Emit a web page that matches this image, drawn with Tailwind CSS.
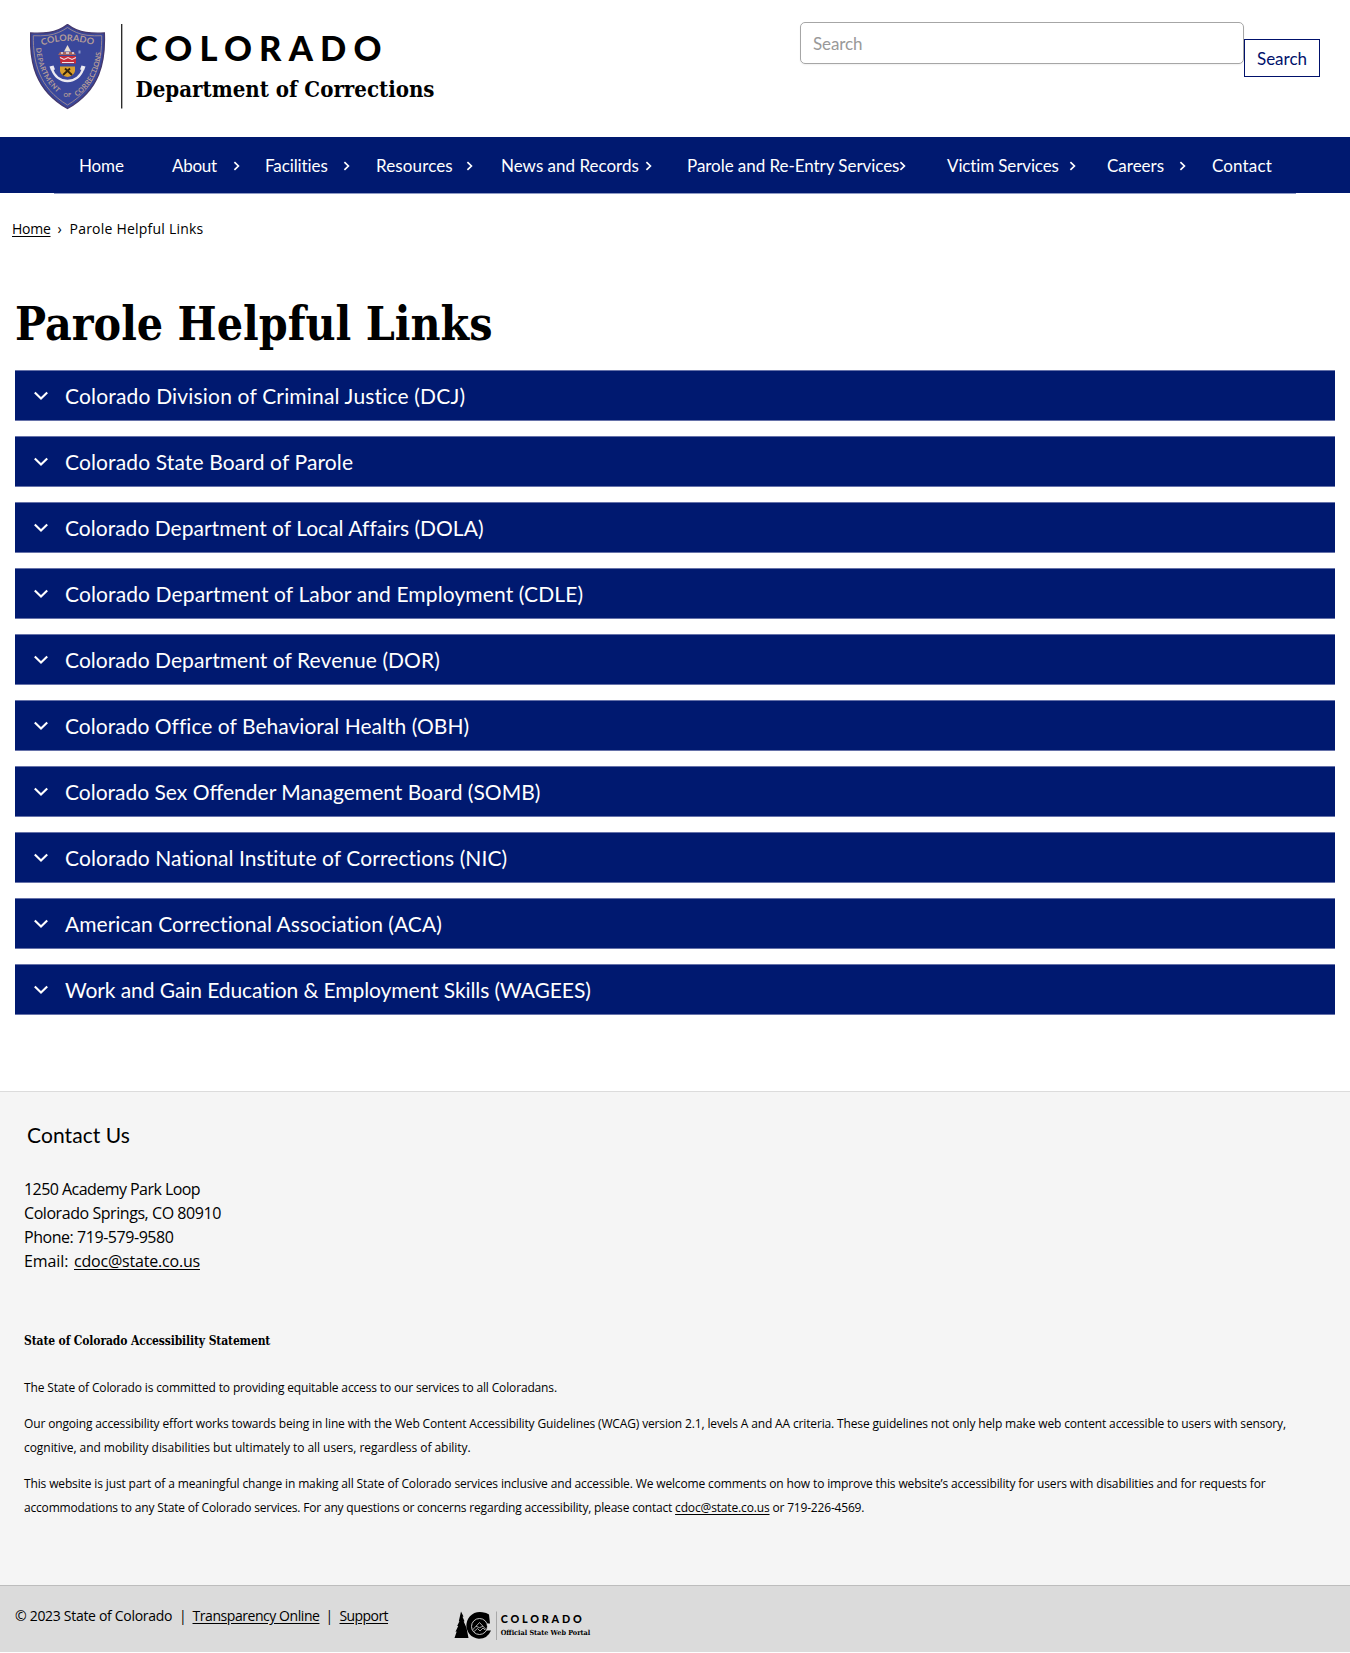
<!DOCTYPE html>
<html lang="en">
<head>
<meta charset="utf-8">
<title>Parole Helpful Links | Department of Corrections</title>
<script src="https://cdn.jsdelivr.net/npm/@tailwindcss/browser@4"></script>
</head>
<body class="bg-white text-black font-['Open_Sans',sans-serif] overflow-x-hidden">
<svg class="hidden">
  <symbol id="chev-right" viewBox="0 0 7 10"><path d="M1.4 1.2 5.4 5 1.4 8.8" fill="none" stroke="currentColor" stroke-width="1.7"/></symbol>
  <symbol id="chev-down" viewBox="0 0 14 10"><path d="M.8 1.4 7 7.6l6.2-6.200" fill="none" stroke="currentColor" stroke-width="2.100"/></symbol>
</svg>

<header class="flex h-[137px] justify-between pl-[30px] pr-[30px]">
  <svg class="mt-6 h-[86px] w-[410px]" viewBox="30 24 410 86">
    <path d="M67.500 24.500C72 28 79 31.500 86 32.500C92 33.300 98 33.300 104.300 33C105.500 62 100 90 67.500 108.500C35 90 29.500 62 30.700 33C37 33.300 43 33.300 49 32.500C56 31.500 63 28 67.500 24.500Z" fill="#3a479b" stroke="#45396d" stroke-width="1.400"/>
    <path d="M67.500 27.500C73 31.500 80 34.500 87 35.300C92 35.900 97 35.900 101.700 35.700C102 62 96 88 67.500 105C39 88 33 62 33.300 35.700C38 35.900 43 35.900 48 35.300C55 34.500 62 31.500 67.500 27.500Z" fill="none" stroke="#a08c92" stroke-width=".9"/>
    <path id="arcTop" d="M42 45.500Q67.500 36.500 94 45.500" fill="none"/>
    <path id="arcLeft" d="M36 48C38 67 44 82 60 95" fill="none"/>
    <path id="arcRight" d="M75 94.500C91 82 97 67 98.500 48" fill="none"/>
    <g font-family="Lato, sans-serif" font-weight="700" fill="#b39c98">
      <text font-size="9"><textPath href="#arcTop" textLength="52" lengthAdjust="spacingAndGlyphs">COLORADO</textPath></text>
      <text font-size="7"><textPath href="#arcLeft" textLength="51">DEPARTMENT</textPath></text>
      <text font-size="7" dy="3"><textPath href="#arcRight" textLength="50">CORRECTIONS</textPath></text>
      <text x="63.500" y="97" font-size="5.500">OF</text>
    </g>
    <path d="M67.500 45 71 51.500H64Z" fill="#e9ded2"/>
    <path d="M60 52h14l2 3H58Z" fill="#a46660"/>
    <path d="M61 53h2m3 0h3m3 0h2" stroke="#e8e2e8" stroke-width="1.300"/>
    <path d="M78.500 50.500h2v3h-2z" fill="#8b97c4"/>
    <path d="M59.500 56H76V63.500H60.500Z" fill="#c62c3b"/>
    <path d="M60 57.500l4 2 4-2 4 2 4-2M62 62.500h12" fill="none" stroke="#efe6ea" stroke-width="1.100"/>
    <path d="M60 66.500H75V71Q74 76 67.500 77Q61 76 60 71Z" fill="#d9a02d"/>
    <path d="M63 75 70 68.500M72 75 65 68.500" stroke="#33240f" stroke-width="1.900"/>
    <path d="M52 69C54 76 60 81 67.500 81C75 81 81 76 83 69" fill="none" stroke="#eceaf2" stroke-width="2.300"/>
    <path d="M49.500 66.500l4-1 1.500 4-4 1zM85.500 66.500l-4-1-1.500 4 4 1z" fill="#eceaf2"/>
    <path d="M121.700 24V108.500" stroke="#222" stroke-width="1.300"/>
    <text x="135" y="61" font-family="Lato, sans-serif" font-weight="900" font-size="34.500" textLength="246.500" lengthAdjust="spacing">COLORADO</text>
    <text x="135.500" y="96.700" font-family="'DejaVu Serif Condensed','DejaVu Serif',serif" font-weight="700" font-size="22" textLength="299" lengthAdjust="spacingAndGlyphs">Department of Corrections</text>
  </svg>
  <form class="flex items-start font-['Lato',sans-serif] text-[17px]">
    <div class="mt-[22px] flex h-[42px] w-[444px] items-center rounded-[5px] border border-[#a6a6a6] pt-0.5 pl-3 tracking-[-0.1px] text-[#999] shadow-[0_1px_2px_rgba(0,0,0,0.06)]">Search</div>
    <button type="button" class="mt-[39px] flex h-[38px] w-[76px] items-center justify-center border border-[#00116b] pt-0.5 text-[#00116b]">Search</button>
  </form>
</header>

<nav class="flex h-[56px] items-center bg-[#001970] pt-0.5 pl-[79px] font-['Lato',sans-serif] text-[17px] whitespace-nowrap text-white">
  <a class="w-[93px] tracking-[-0.15px]">Home</a>
  <a class="flex w-[93px] items-center justify-between pr-[25px] tracking-[-0.3px]">About<svg class="h-[10px] w-[7px]"><use href="#chev-right"/></svg></a>
  <a class="flex w-[111px] items-center justify-between pr-[26px] tracking-[-0.1px]">Facilities<svg class="h-[10px] w-[7px]"><use href="#chev-right"/></svg></a>
  <a class="flex w-[125px] items-center justify-between pr-[28px] tracking-[0.13px]">Resources<svg class="h-[10px] w-[7px]"><use href="#chev-right"/></svg></a>
  <a class="flex w-[186px] items-center justify-between pr-[35px]">News and Records<svg class="h-[10px] w-[7px]"><use href="#chev-right"/></svg></a>
  <a class="flex w-[260px] items-center tracking-[-0.05px]"><span class="w-[211.5px]">Parole and Re-Entry Services</span><svg class="h-[10px] w-[7px] shrink-0"><use href="#chev-right"/></svg></a>
  <a class="flex w-[160px] items-center justify-between pr-[31px] tracking-[-0.13px]">Victim Services<svg class="h-[10px] w-[7px]"><use href="#chev-right"/></svg></a>
  <a class="flex w-[105px] items-center justify-between pr-[26px]">Careers<svg class="h-[10px] w-[7px]"><use href="#chev-right"/></svg></a>
  <a class="tracking-[0.14px]">Contact</a>
</nav>
<div class="mx-[54px] h-px bg-[#8f9bc4]"></div>

<div class="mt-[23px] flex h-6 items-center pl-3 text-sm whitespace-nowrap">
  <a class="tracking-[-0.27px] underline underline-offset-2">Home</a>
  <span class="ml-[7px] w-[12px]">›</span>
  <span class="tracking-[0.22px]">Parole Helpful Links</span>
</div>

<main class="px-[15px]">
  <h1 class="mt-[53px] h-[60px] font-['DejaVu_Serif_Condensed','DejaVu_Serif',serif] text-[46px] leading-[60px] font-bold">Parole Helpful Links</h1>
  <div class="mt-4 flex flex-col gap-[15px] font-['Lato',sans-serif] text-[21px] leading-[25px] text-white">
    <div class="flex h-[51px] items-center gap-[17px] border-y border-[#6672a9] bg-[#001970] pl-[19px]"><svg class="h-[10px] w-[14px]"><use href="#chev-down"/></svg><span class="tracking-[0.18px]">Colorado Division of Criminal Justice (DCJ)</span></div>
    <div class="flex h-[51px] items-center gap-[17px] border-y border-[#6672a9] bg-[#001970] pl-[19px]"><svg class="h-[10px] w-[14px]"><use href="#chev-down"/></svg><span class="tracking-[0.13px]">Colorado State Board of Parole</span></div>
    <div class="flex h-[51px] items-center gap-[17px] border-y border-[#6672a9] bg-[#001970] pl-[19px]"><svg class="h-[10px] w-[14px]"><use href="#chev-down"/></svg><span class="tracking-[0.02px]">Colorado Department of Local Affairs (DOLA)</span></div>
    <div class="flex h-[51px] items-center gap-[17px] border-y border-[#6672a9] bg-[#001970] pl-[19px]"><svg class="h-[10px] w-[14px]"><use href="#chev-down"/></svg><span class="tracking-[0.12px]">Colorado Department of Labor and Employment (CDLE)</span></div>
    <div class="flex h-[51px] items-center gap-[17px] border-y border-[#6672a9] bg-[#001970] pl-[19px]"><svg class="h-[10px] w-[14px]"><use href="#chev-down"/></svg><span class="tracking-[0.06px]">Colorado Department of Revenue (DOR)</span></div>
    <div class="flex h-[51px] items-center gap-[17px] border-y border-[#6672a9] bg-[#001970] pl-[19px]"><svg class="h-[10px] w-[14px]"><use href="#chev-down"/></svg><span class="tracking-[0.03px]">Colorado Office of Behavioral Health (OBH)</span></div>
    <div class="flex h-[51px] items-center gap-[17px] border-y border-[#6672a9] bg-[#001970] pl-[19px]"><svg class="h-[10px] w-[14px]"><use href="#chev-down"/></svg><span>Colorado Sex Offender Management Board (SOMB)</span></div>
    <div class="flex h-[51px] items-center gap-[17px] border-y border-[#6672a9] bg-[#001970] pl-[19px]"><svg class="h-[10px] w-[14px]"><use href="#chev-down"/></svg><span class="tracking-[0.08px]">Colorado National Institute of Corrections (NIC)</span></div>
    <div class="flex h-[51px] items-center gap-[17px] border-y border-[#6672a9] bg-[#001970] pl-[19px]"><svg class="h-[10px] w-[14px]"><use href="#chev-down"/></svg><span class="tracking-[0.04px]">American Correctional Association (ACA)</span></div>
    <div class="flex h-[51px] items-center gap-[17px] border-y border-[#6672a9] bg-[#001970] pl-[19px]"><svg class="h-[10px] w-[14px]"><use href="#chev-down"/></svg><span class="tracking-[-0.08px]">Work and Gain Education &amp; Employment Skills (WAGEES)</span></div>
  </div>
</main>

<footer class="mt-[76px]">
  <section class="h-[494px] border-t border-[#dcdcdc] bg-[#f5f5f5] pt-[31px] pl-6 whitespace-nowrap">
    <h2 class="pl-[3px] font-['Lato',sans-serif] text-[21px] leading-6 tracking-[0.08px]">Contact Us</h2>
    <address class="mt-[30px] text-base leading-6 not-italic">
      <div class="tracking-[-0.55px]">1250 Academy Park Loop</div>
      <div class="tracking-[-0.44px]">Colorado Springs, CO 80910</div>
      <div class="tracking-[-0.45px]">Phone: 719-579-9580</div>
      <div class="flex"><span class="w-[50px] tracking-[-0.1px]">Email:</span><a class="tracking-[-0.2px] underline underline-offset-2">cdoc@state.co.us</a></div>
    </address>
    <h3 class="mt-14 font-['DejaVu_Serif_Condensed','DejaVu_Serif',serif] text-xs leading-6 font-bold tracking-[-0.13px]">State of Colorado Accessibility Statement</h3>
    <div class="mt-[23px] flex flex-col gap-3 text-xs leading-6">
      <p class="tracking-[-0.15px]">The State of Colorado is committed to providing equitable access to our services to all Coloradans.</p>
      <p><span class="block tracking-[-0.146px]">Our ongoing accessibility effort works towards being in line with the Web Content Accessibility Guidelines (WCAG) version 2.1, levels A and AA criteria. These guidelines not only help make web content accessible to users with sensory,</span>
      <span class="block tracking-[-0.05px]">cognitive, and mobility disabilities but ultimately to all users, regardless of ability.</span></p>
      <p><span class="block tracking-[-0.137px]">This website is just part of a meaningful change in making all State of Colorado services inclusive and accessible. We welcome comments on how to improve this website’s accessibility for users with disabilities and for requests for</span>
      <span class="block tracking-[-0.185px]">accommodations to any State of Colorado services. For any questions or concerns regarding accessibility, please contact <a class="tracking-[-0.15px] underline underline-offset-2">cdoc@state.co.us</a> or 719-226-4569.</span></p>
    </div>
  </section>
  <section class="flex h-[67px] border-t border-[#bdbdbd] bg-[#dbdbdb] pl-[15px] text-sm leading-6 whitespace-nowrap">
    <div class="mt-[18px] flex w-[439px]">
      <span class="w-[164px] tracking-[-0.3px]">© 2023 State of Colorado</span>
      <span class="w-[13.5px]">|</span>
      <a class="mr-[6px] tracking-[-0.44px] underline underline-offset-2">Transparency Online</a>
      <span class="w-[14px]">|</span>
      <a class="tracking-[-0.57px] underline underline-offset-2">Support</a>
    </div>
    <svg class="mt-[25px] h-[30px] w-[140px]" viewBox="454 1611 140 30">
      <path d="M461 1611.500l2.500 5-1 .2 2 4.500-.8.200 2.800 6.300 2 10.300h-14l2.200-6.500-1.200.2 2.700-5.700-1 .1 2.300-5-.7.1z" fill="#000"/>
      <path d="M489 1614.500L490 1623.500H486L485.500 1630.500H491Q487.500 1638.800 479 1638.800A13.400 13.400 0 1 1 482.500 1612.300Q486.500 1612.500 489 1614.500Z" fill="#000"/>
      <circle cx="479.500" cy="1626.500" r="8" fill="#000" stroke="#dbdbdb" stroke-width=".9"/>
      <path d="M472.500 1630 479.500 1622.500 486.500 1630M476 1626.200l3.500 1.500 3.500-1.500M474 1631.500l3.500-3 2.500 2.500 3-3 2 2" fill="none" stroke="#cfcfcf" stroke-width=".8"/>
      <path d="M496.500 1611.500V1640" stroke="#9a9a9a" stroke-width=".8"/>
      <text x="500.700" y="1623.200" font-family="Lato, sans-serif" font-weight="900" font-size="10.800" textLength="81" lengthAdjust="spacing">COLORADO</text>
      <text x="500.700" y="1635.200" font-family="'DejaVu Serif Condensed','DejaVu Serif',serif" font-weight="700" font-size="7" textLength="89.500" lengthAdjust="spacingAndGlyphs">Official State Web Portal</text>
    </svg>
  </section>
</footer>
</body>
</html>
